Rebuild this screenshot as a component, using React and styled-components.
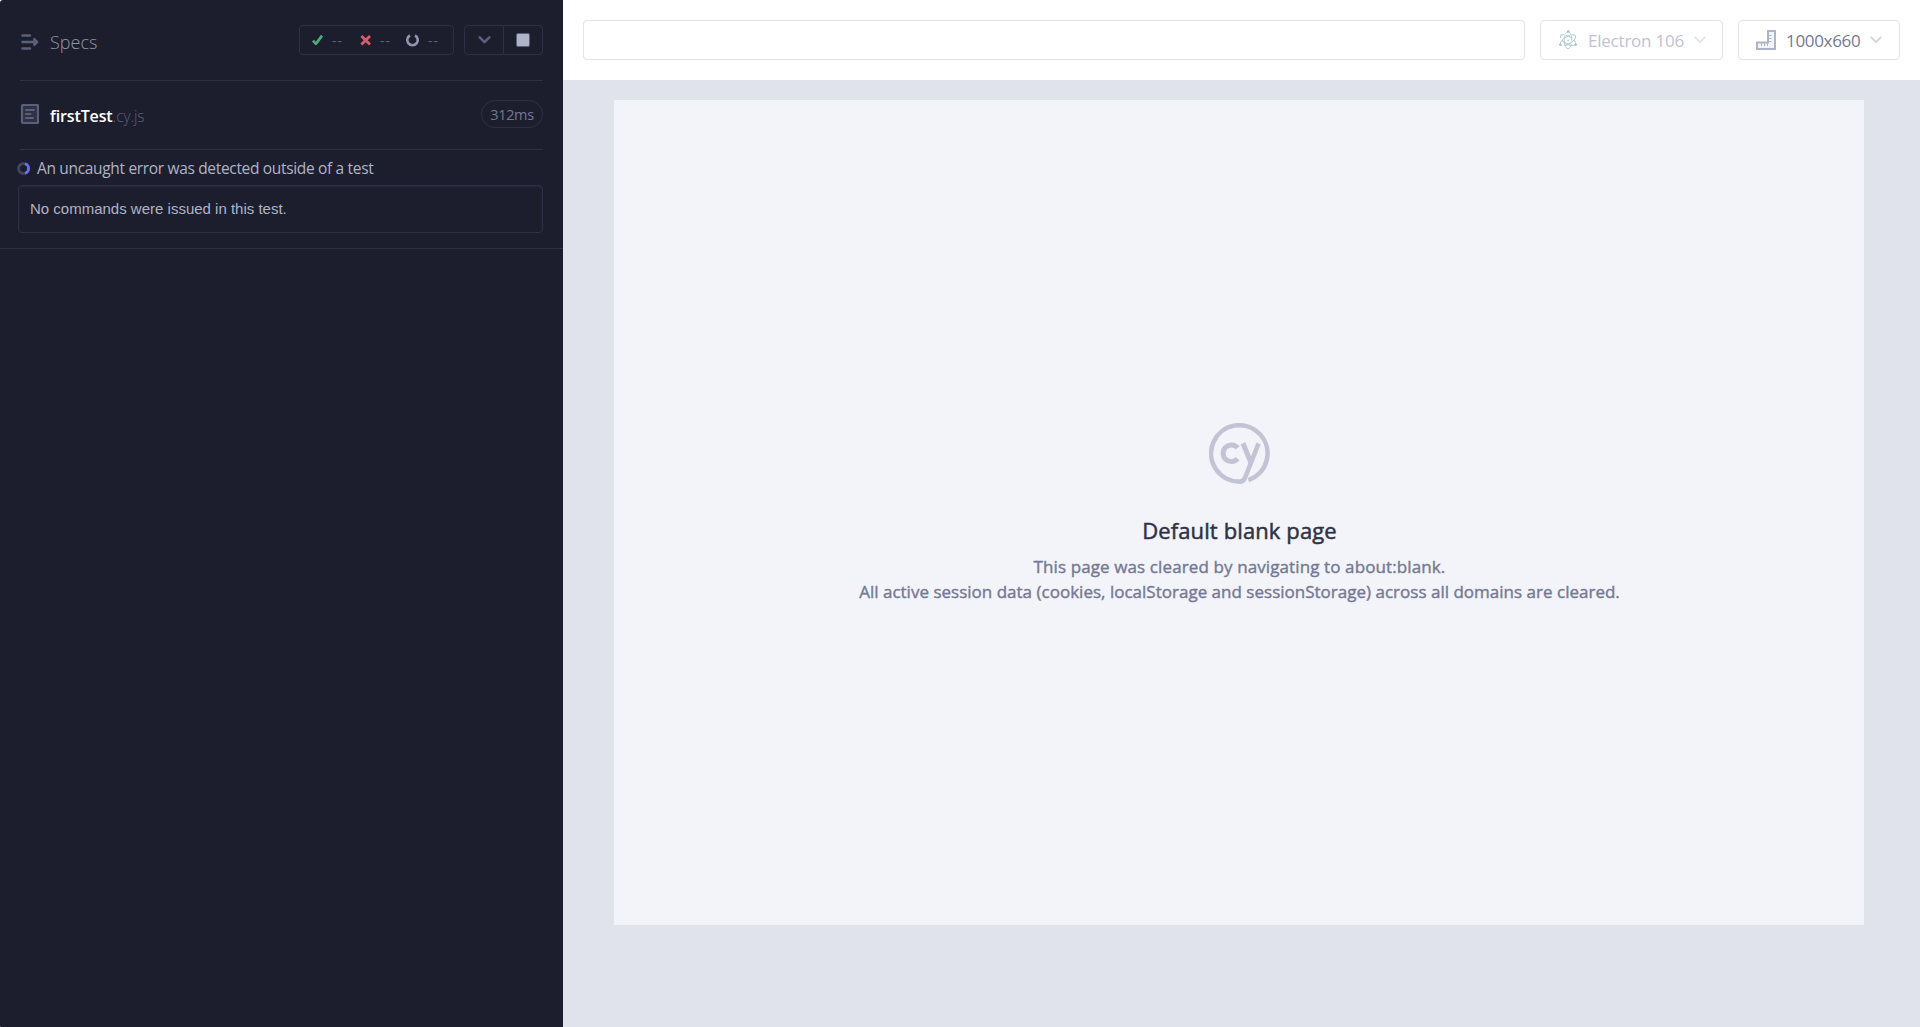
import React from 'react';
import styled, { createGlobalStyle } from 'styled-components';

const GlobalStyle = createGlobalStyle`
  *, *::before, *::after { box-sizing: border-box; }
  body { margin: 0; background: #fff; font-family: "Open Sans", "Noto Sans", sans-serif; }
  svg { display: block; flex: none; }
`;

const Shell = styled.div`
  display: flex;
  height: 100vh;
  overflow: hidden;
`;

const Reporter = styled.aside`
  width: 563px;
  flex: none;
  background: #1d1e2d;
  border-radius: 3px 0 0 1px;
`;

const ReporterHeader = styled.header`
  display: flex;
  align-items: center;
  height: 81px;
  margin: 0 20px;
  border-bottom: 1px solid #2e3046;
`;

const SpecsLink = styled.a`
  display: flex;
  align-items: center;
  flex: 1;
  gap: 11px;
  padding-top: 3px;
  color: #9095ad;
  font-size: 18px;
  font-weight: 300;
  line-height: 24px;
`;

const Stats = styled.ul`
  display: flex;
  align-items: center;
  width: 155px;
  height: 30px;
  margin: 0 10px 0 0;
  padding: 0 0 0 12px;
  list-style: none;
  border: 1px solid #2e3046;
  border-radius: 4px;
`;

const Stat = styled.li`
  display: flex;
  align-items: center;
  gap: 8px;
  width: ${(p) => p.$width}px;
`;

const Dashes = styled.span`
  color: #5a5f7a;
  font-size: 14px;
  line-height: 20px;
  letter-spacing: 0.9px;
  transform: translateY(1px);
`;

const Controls = styled.div`
  display: flex;
  width: 79px;
  height: 30px;
  border: 1px solid #2e3046;
  border-radius: 4px;
`;

const ControlButton = styled.button`
  display: flex;
  align-items: center;
  justify-content: center;
  flex: 1;
  padding: 0;
  border: 0;
  background: none;
  & + & { border-left: 1px solid #2e3046; }
`;

const SpecBar = styled.div`
  display: flex;
  align-items: center;
  height: 69px;
  margin: 0 20px;
  padding-bottom: 2px;
  border-bottom: 1px solid #2e3046;
`;

const SpecName = styled.div`
  flex: 1;
  margin-left: 11px;
  padding-top: 4px;
  color: #fff;
  font-size: 16px;
  font-weight: 600;
  line-height: 24px;
  letter-spacing: -0.12px;
`;

const Extension = styled.span`
  color: #5a5f7a;
  font-size: 15.5px;
  font-weight: 300;
`;

const Duration = styled.span`
  display: flex;
  align-items: center;
  justify-content: center;
  width: 62px;
  height: 28px;
  border: 1px solid #2e3046;
  border-radius: 14px;
  color: #747994;
  font-size: 14.5px;
  letter-spacing: -0.35px;
`;

const Runnable = styled.section`
  height: 99px;
  padding: 6px 20px 0 17px;
  border-bottom: 1px solid #2e3046;
`;

const RunnableTitle = styled.div`
  display: flex;
  align-items: center;
  gap: 7px;
  height: 24px;
  color: #afb3c7;
  font-size: 15.5px;
  letter-spacing: -0.33px;
  white-space: nowrap;
`;

const TitleText = styled.span`
  padding-bottom: 1px;
`;

const NoCommands = styled.div`
  height: 48px;
  margin: 5px 0 0 1px;
  padding: 0 11px;
  border: 1px solid #2e3046;
  border-radius: 4px;
  box-shadow: inset 0 1px 2px rgba(46, 48, 70, 0.6);
  color: #afb3c7;
  font: 15px/46px "Liberation Sans", Arial, sans-serif;
`;

const Runner = styled.main`
  display: flex;
  flex-direction: column;
  flex: 1;
  min-width: 0;
  background: #e0e2ec;
`;

const Toolbar = styled.header`
  display: flex;
  align-items: center;
  height: 80px;
  padding: 0 20px;
  background: #fff;
`;

const UrlInput = styled.div`
  flex: 1;
  height: 40px;
  border: 1px solid #e1e3ed;
  border-radius: 4px;
`;

const Picker = styled.button`
  display: flex;
  align-items: center;
  width: ${(p) => p.$width}px;
  height: 40px;
  margin-left: 15px;
  padding: 0 0 0 17px;
  border: 1px solid #e1e3ed;
  border-radius: 4px;
  background: #fff;
  font-family: inherit;
  font-size: 17px;
  line-height: 24px;
  letter-spacing: ${(p) => p.$spacing}px;
`;

const PickerLabel = styled.span`
  margin: 0 10px;
  padding-top: 2px;
  color: ${(p) => (p.$muted ? '#bfc2d4' : '#747994')};
`;

const Stage = styled.div`
  flex: 1;
  padding: 20px 56px 0 51px;
`;

const Viewport = styled.div`
  display: flex;
  flex-direction: column;
  align-items: center;
  height: 825px;
  padding: 323px 0 0 1px;
  background: #f3f4fa;
  text-align: center;
`;

const BlankTitle = styled.h1`
  margin: 30px 0 0;
  color: #2e3247;
  font-size: 22px;
  font-weight: 500;
  line-height: 32px;
  letter-spacing: 0.12px;
  -webkit-text-stroke: 0.5px #2e3247;
`;

const BlankText = styled.p`
  margin: 8px 0 0;
  color: #747994;
  font-size: 17px;
  font-weight: 500;
  line-height: 25px;
  -webkit-text-stroke: 0.4px #747994;
`;

const BlankLine = styled.span`
  display: block;
  letter-spacing: ${(p) => p.$spacing}px;
`;

const SpecsIcon = () => (
  <svg width="19" height="18" viewBox="0 0 19 18" fill="none" stroke="#5a5f7a" strokeWidth="2.3" strokeLinecap="round">
    <path d="M2.300 2.500h7.800M2.300 9h13M2.300 15.500h7.800" />
    <path d="M14.300 6 17.300 9l-3 3z" fill="#5a5f7a" strokeLinejoin="round" />
  </svg>
);

const DocumentIcon = () => (
  <svg width="19" height="20" viewBox="0 0 19 20">
    <rect x="2" y="1" width="16" height="18" rx="1" fill="#2e3247" stroke="#5a5f7a" strokeWidth="2.200" />
    <path d="M6 6h8M6 10h4.500M6 14h7" stroke="#5a5f7a" strokeWidth="2.200" strokeLinecap="round" />
  </svg>
);

const PassIcon = () => (
  <svg width="12" height="12" viewBox="0 0 12 12" fill="none" stroke="#4bac78" strokeWidth="2.7">
    <path d="M1 6.600 4 9.800 10 1.600" strokeLinejoin="round" />
  </svg>
);

const FailIcon = () => (
  <svg width="12" height="12" viewBox="0 0 12 12" stroke="#dc5a6e" strokeWidth="2.8">
    <path d="M1.400 1.900l8.600 8.600M10 1.900l-8.600 8.600" />
  </svg>
);

const PendingIcon = () => (
  <svg width="14" height="14" viewBox="0 0 14 14" fill="none" stroke="#9095ad" strokeWidth="2.600">
    <path d="M4 2.500A5.200 5.200 0 1 0 9 2.500" />
  </svg>
);

const Chevron = ({ color, width = 12, stroke = 2 }) => (
  <svg width={width} height="8" viewBox="0 0 12 8" fill="none" stroke={color} strokeWidth={stroke} strokeLinecap="round" strokeLinejoin="round">
    <path d="M1.200 1.400 6 6.200l4.800-4.800" />
  </svg>
);

const StopIcon = () => (
  <svg width="14" height="14" viewBox="0 0 14 14">
    <rect x="0.500" y="0.500" width="13" height="13" rx="1.500" fill="#afb3c7" stroke="#5a5f7a" />
  </svg>
);

const Spinner = () => (
  <svg width="13" height="13" viewBox="0 0 13 13" fill="none" strokeWidth="2.600">
    <circle cx="6.500" cy="6.500" r="5" stroke="#434861" />
    <path d="M8 1.700A5 5 0 0 1 8 11.300" stroke="#6470f3" />
  </svg>
);

const ElectronIcon = () => (
  <svg width="20" height="20" viewBox="0 0 20 20" fill="none" stroke="#b0cbd1" strokeWidth="0.900">
    <ellipse cx="10" cy="10.200" rx="8.600" ry="3.800" transform="rotate(30 10 10.200)" strokeDasharray="15 2.500" />
    <ellipse cx="10" cy="10.200" rx="8.600" ry="3.800" transform="rotate(-30 10 10.200)" strokeDasharray="16 2" />
    <ellipse cx="10" cy="10.200" rx="8.600" ry="3.800" transform="rotate(90 10 10.200)" strokeDasharray="14 3" />
    <g fill="#a0bfc6" stroke="none">
      <circle cx="10" cy="10.200" r="0.800" />
      <circle cx="10.200" cy="1.400" r="1.200" />
      <circle cx="2.200" cy="14.600" r="1.200" />
      <circle cx="17.800" cy="14.600" r="1.200" />
    </g>
  </svg>
);

const RulerIcon = () => (
  <svg width="20" height="20" viewBox="0 0 20 20" fill="none" stroke="#afb3c7">
    <path d="M12 1h7v18H1v-6.500h11z" fill="#f3f4fa" strokeWidth="2" />
    <path d="M5.500 13v3M8.500 13v3M11.500 13v3M13 5.500h2.500M13 8.500h2.500M13 11.500h2.500" strokeWidth="1" />
  </svg>
);

const CypressMark = () => (
  <svg width="61" height="61" viewBox="0 0 61 61" fill="none" stroke="#c2c4d6" strokeWidth="4.600">
    <path d="M39.400 57.100A28.200 28.200 0 1 0 30.500 58.600C33.700 58.600 34.900 57.500 36 54.800L49.600 20.300" strokeLinejoin="round" />
    <path d="M34 20.300 42 39.900" strokeWidth="5" />
    <path d="M28.700 24.900A8.300 8.300 0 1 0 28.700 35.700" strokeWidth="5" />
  </svg>
);

const stats = [
  { id: 'passed', Icon: PassIcon, width: 48 },
  { id: 'failed', Icon: FailIcon, width: 46 },
  { id: 'pending', Icon: PendingIcon, width: 40 },
];

export default function App() {
  return (
    <>
      <GlobalStyle />
      <Shell>
        <Reporter>
          <ReporterHeader>
            <SpecsLink>
              <SpecsIcon />
              Specs
            </SpecsLink>
            <Stats>
              {stats.map(({ id, Icon, width }) => (
                <Stat key={id} $width={width}>
                  <Icon />
                  <Dashes>--</Dashes>
                </Stat>
              ))}
            </Stats>
            <Controls>
              <ControlButton>
                <Chevron color="#5a5f7a" width={13} stroke={2.6} />
              </ControlButton>
              <ControlButton>
                <StopIcon />
              </ControlButton>
            </Controls>
          </ReporterHeader>
          <SpecBar>
            <DocumentIcon />
            <SpecName>
              firstTest<Extension>.cy.js</Extension>
            </SpecName>
            <Duration>312ms</Duration>
          </SpecBar>
          <Runnable>
            <RunnableTitle>
              <Spinner />
              <TitleText>An uncaught error was detected outside of a test</TitleText>
            </RunnableTitle>
            <NoCommands>No commands were issued in this test.</NoCommands>
          </Runnable>
        </Reporter>
        <Runner>
          <Toolbar>
            <UrlInput />
            <Picker $width={183} $spacing={-0.22}>
              <ElectronIcon />
              <PickerLabel $muted>Electron 106</PickerLabel>
              <Chevron color="#e1e3ed" stroke={1.8} />
            </Picker>
            <Picker $width={162} $spacing={-0.33}>
              <RulerIcon />
              <PickerLabel>1000x660</PickerLabel>
              <Chevron color="#d0d2e0" stroke={1.8} />
            </Picker>
          </Toolbar>
          <Stage>
            <Viewport>
              <CypressMark />
              <BlankTitle>Default blank page</BlankTitle>
              <BlankText>
                <BlankLine $spacing={0.11}>This page was cleared by navigating to about:blank.</BlankLine>
                <BlankLine $spacing={0.01}>
                  All active session data (cookies, localStorage and sessionStorage) across all domains are cleared.
                </BlankLine>
              </BlankText>
            </Viewport>
          </Stage>
        </Runner>
      </Shell>
    </>
  );
}
